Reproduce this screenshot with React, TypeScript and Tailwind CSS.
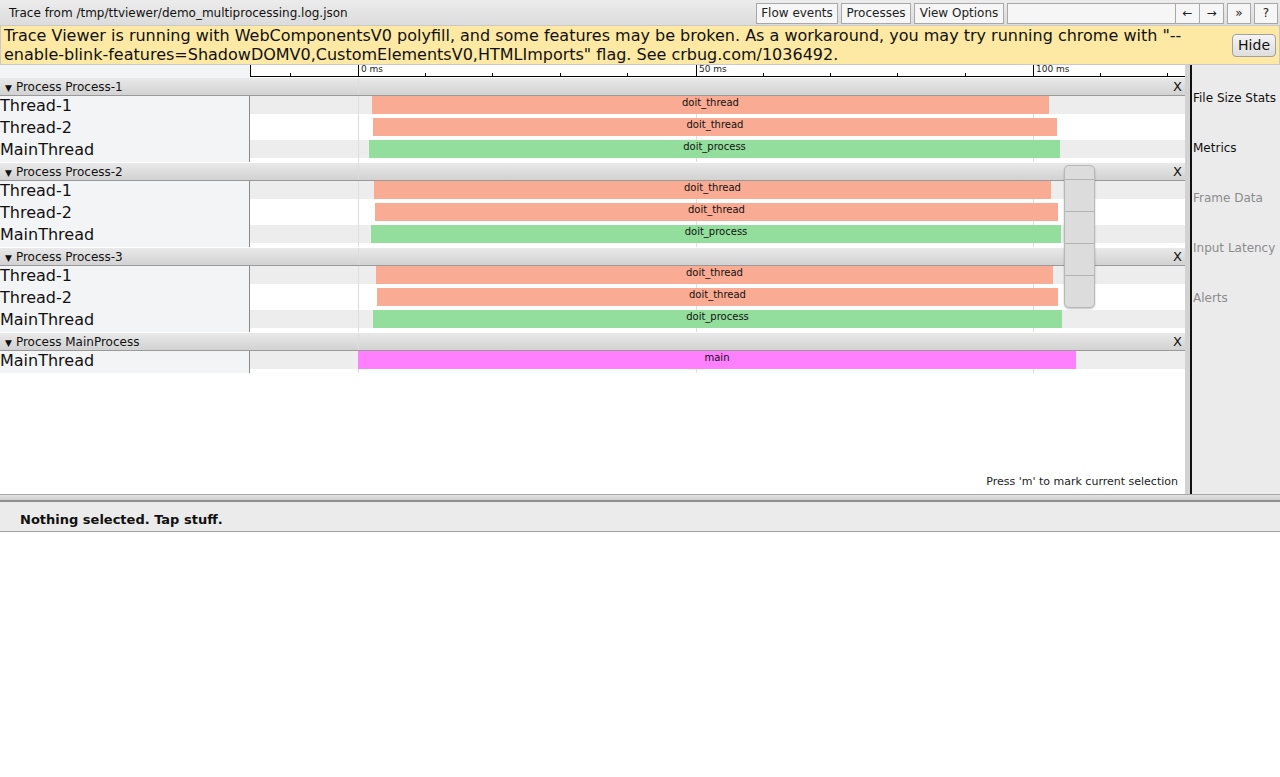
import React from "react";

type Slice = { name: string; start: number; end: number; color: string };
type Thread = { name: string; slice: Slice };
type Proc = { name: string; threads: Thread[] };

const SALMON = "#f9ab93";
const GREEN = "#93de9c";
const PINK = "#ff80ff";

// x positions are page pixels; track starts at 250
const processes: Proc[] = [
  {
    name: "Process Process-1",
    threads: [
      { name: "Thread-1", slice: { name: "doit_thread", start: 372, end: 1049, color: SALMON } },
      { name: "Thread-2", slice: { name: "doit_thread", start: 373, end: 1057, color: SALMON } },
      { name: "MainThread", slice: { name: "doit_process", start: 369, end: 1060, color: GREEN } },
    ],
  },
  {
    name: "Process Process-2",
    threads: [
      { name: "Thread-1", slice: { name: "doit_thread", start: 374, end: 1051, color: SALMON } },
      { name: "Thread-2", slice: { name: "doit_thread", start: 375, end: 1058, color: SALMON } },
      { name: "MainThread", slice: { name: "doit_process", start: 371, end: 1061, color: GREEN } },
    ],
  },
  {
    name: "Process Process-3",
    threads: [
      { name: "Thread-1", slice: { name: "doit_thread", start: 376, end: 1053, color: SALMON } },
      { name: "Thread-2", slice: { name: "doit_thread", start: 377, end: 1058, color: SALMON } },
      { name: "MainThread", slice: { name: "doit_process", start: 373, end: 1062, color: GREEN } },
    ],
  },
  {
    name: "Process MainProcess",
    threads: [{ name: "MainThread", slice: { name: "main", start: 358, end: 1076, color: PINK } }],
  },
];

const TRACK_X = 250;
const majors = [358, 696, 1033];
const minors = [290, 425, 492, 560, 627, 763, 830, 897, 965, 1100, 1167];

function GridLines() {
  return (
    <>
      {majors.map((x) => (
        <div key={x} className="absolute top-0 bottom-0 w-px bg-[#dedede]" style={{ left: x - TRACK_X }} />
      ))}
    </>
  );
}

function ThreadRow({ t, odd }: { t: Thread; odd: boolean }) {
  const s = t.slice;
  return (
    <div className="flex h-[22px]">
      <div className="w-[250px] shrink-0 border-r border-[#8a8a8a] bg-[#f3f4f6] text-[16px] leading-[20px] text-[#111]">
        {t.name}
      </div>
      <div className="relative flex-1">
        <div className={"absolute left-0 right-0 top-0 h-[18px] " + (odd ? "bg-[#ededed]" : "bg-white")} />
        <GridLines />
        <div
          className="absolute top-0 h-[18px] text-center text-[10px] leading-[13px] text-[#111] overflow-hidden"
          style={{ left: s.start - TRACK_X, width: s.end - s.start, backgroundColor: s.color }}
        >
          {s.name}
        </div>
      </div>
    </div>
  );
}

function ProcessGroup({ p }: { p: Proc }) {
  return (
    <div className="mb-px">
      <div className="relative flex h-[18px] items-center justify-between border-b border-[#9a9a9a] bg-gradient-to-b from-[#e9e9e9] to-[#d2d2d2] text-[12px] text-[#111]">
        <span className="pl-[5px]">
          <span className="text-[9px] mr-[4px]">▼</span>
          {p.name}
        </span>
        <span className="pr-[3px] text-[13px]">X</span>
        <div className="absolute top-0 bottom-0 w-px bg-[#dcdcdc]" style={{ left: 358 }} />
      </div>
      {p.threads.map((t, i) => (
        <ThreadRow key={i} t={t} odd={i % 2 === 0} />
      ))}
    </div>
  );
}

function Ruler() {
  return (
    <div className="flex h-[13px]">
      <div className="w-[250px] shrink-0 bg-[#f3f4f6]" />
      <svg width={935} height={13} className="block">
        <rect x={0} y={0} width={935} height={13} fill="#fff" />
        <line x1={0.5} y1={0} x2={0.5} y2={12} stroke="#000" />
        <line x1={0} y1={11.5} x2={935} y2={11.5} stroke="#000" />
        {majors.map((x) => (
          <line key={x} x1={x - TRACK_X + 0.5} y1={0} x2={x - TRACK_X + 0.5} y2={12} stroke="#000" />
        ))}
        {minors.map((x) => (
          <line key={x} x1={x - TRACK_X + 0.5} y1={8} x2={x - TRACK_X + 0.5} y2={12} stroke="#000" />
        ))}
        {[
          ["0 ms", 358],
          ["50 ms", 696],
          ["100 ms", 1033],
        ].map(([label, x]) => (
          <text key={label as string} x={(x as number) - TRACK_X + 3} y={7} fontSize={9} fill="#222" fontFamily="DejaVu Sans">
            {label}
          </text>
        ))}
      </svg>
    </div>
  );
}

function ToolButton({ children, className = "" }: { children: React.ReactNode; className?: string }) {
  return (
    <div
      className={
        "h-[21px] flex items-center justify-center whitespace-nowrap border border-[#a8a8a8] bg-[#f6f6f6] text-[12px] text-[#222] " +
        className
      }
    >
      {children}
    </div>
  );
}

export default function App() {
  return (
    <div className="w-[1280px] h-[777px] bg-white overflow-hidden" style={{ fontFamily: '"DejaVu Sans", sans-serif' }}>
      {/* top bar */}
      <div className="flex h-[25px] items-center bg-gradient-to-b from-[#ececec] to-[#dcdcdc]">
        <div className="pl-[9px] text-[12px] text-[#111] flex-1">Trace from /tmp/ttviewer/demo_multiprocessing.log.json</div>
        <div className="flex items-center gap-[3px] pr-[2px] pt-px">
          <ToolButton className="w-[82px]">Flow events</ToolButton>
          <ToolButton className="w-[70px]">Processes</ToolButton>
          <ToolButton className="w-[90px]">View Options</ToolButton>
          <div className="flex">
            <div className="h-[21px] w-[169px] border border-[#a8a8a8] bg-[#f6f6f6]" />
            <ToolButton className="w-[24px] border-l-0">←</ToolButton>
            <ToolButton className="w-[24px] border-l-0">→</ToolButton>
          </div>
          <ToolButton className="w-[24px] text-[10px]">»</ToolButton>
          <ToolButton className="w-[24px]">?</ToolButton>
        </div>
      </div>

      {/* warning banner */}
      <div className="flex h-[40px] items-start border border-[#c9c9c9] bg-[#fde9a3]">
        <div className="w-[1232px] pl-[3px] text-[16px] leading-[19px] text-[#111]">
          Trace Viewer is running with WebComponentsV0 polyfill, and some features may be broken. As a workaround, you may try running chrome with "--enable-blink-features=ShadowDOMV0,CustomElementsV0,HTMLImports" flag. See crbug.com/1036492.
        </div>
        <button className="ml-auto mr-[3px] mt-[8px] h-[23px] rounded-[4px] border border-[#a0a0a0] bg-gradient-to-b from-[#f4f4f4] to-[#dedede] px-[5px] text-[14px] text-[#111]">
          Hide
        </button>
      </div>

      {/* main */}
      <div className="flex h-[429px]">
        <div className="relative w-[1185px] flex flex-col">
          <Ruler />
          <div className="flex flex-col">
            {processes.map((p, i) => (
              <ProcessGroup key={i} p={p} />
            ))}
          </div>
          <div className="mt-auto pb-[4px] pr-[7px] text-right text-[11px] text-[#222]">Press 'm' to mark current selection</div>

          {/* zoom control */}
          <div className="absolute left-[1064px] top-[100px] flex h-[143px] w-[31px] flex-col rounded-[5px] border border-[#b8b8b8] bg-[#dcdcdc] shadow-[0_1px_2px_rgba(0,0,0,0.25)]">
            <div className="h-[14px] border-b border-[#b4b4b4]" />
            <div className="h-[32px] border-b border-[#b4b4b4]" />
            <div className="h-[32px] border-b border-[#b4b4b4]" />
            <div className="h-[32px] border-b border-[#b4b4b4]" />
            <div className="flex-1" />
          </div>
        </div>
        <div className="w-[5px] bg-[#d2d2d2]" />
        <div className="w-[2px] bg-[#111]" />
        <div className="flex-1 bg-[#ebebeb] pt-[26px] pl-px text-[12px] leading-[15px]">
          <div className="h-[50px] text-[#111]">File Size Stats</div>
          <div className="h-[50px] text-[#111]">Metrics</div>
          <div className="h-[50px] text-[#8c8c8c]">Frame Data</div>
          <div className="h-[50px] text-[#8c8c8c]">Input Latency</div>
          <div className="h-[50px] text-[#8c8c8c]">Alerts</div>
        </div>
      </div>

      {/* divider */}
      <div className="h-[8px] border-t border-[#a8a8a8] border-b-2 border-b-[#8e8e8e] bg-gradient-to-b from-[#e2e2e2] to-[#cfcfcf]" />

      {/* analysis panel */}
      <div className="flex h-[30px] items-center border-b border-[#a0a0a0] bg-[#ebebeb] pl-[20px] pt-[6px] text-[13px] font-bold text-[#111]">
        Nothing selected. Tap stuff.
      </div>
    </div>
  );
}
